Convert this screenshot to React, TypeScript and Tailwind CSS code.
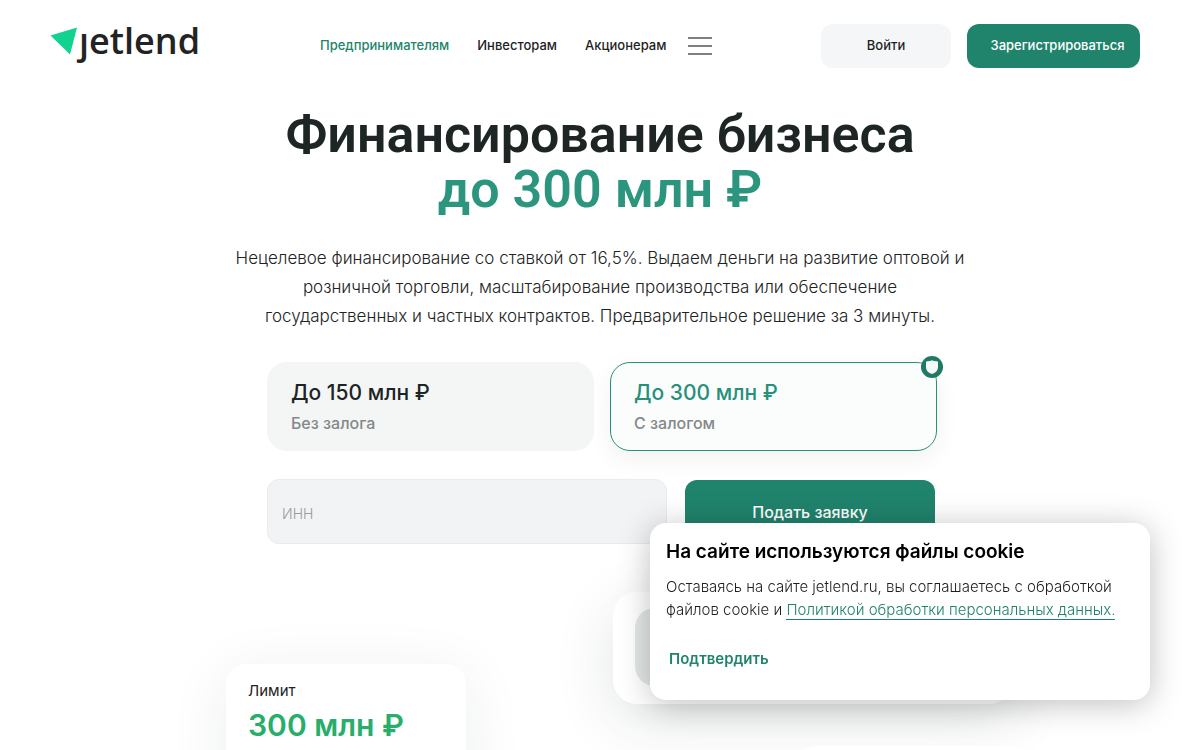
import { useState } from "react";

const NAV = ["Предпринимателям", "Инвесторам", "Акционерам"];

const OFFERS = [
  { id: "plain", title: "До 150 млн ₽", note: "Без залога" },
  { id: "secured", title: "До 300 млн ₽", note: "С залогом" },
];

function Logo() {
  return (
    <a href="#" aria-label="jetlend" className="block w-[150px]">
      <svg viewBox="0 0 152 52" className="h-[52px] w-[152px]" aria-hidden="true">
        <text x="29" y="34" fill="#232323" className="font-['Open_Sans'] text-[36px] font-semibold">
          jetlend
        </text>
        <rect x="25" y="0" width="13" height="13" fill="#fff" />
        <path d="M0.500 15.500 L27 7.500 L20 34.500 Z" fill="#12d290" />
      </svg>
    </a>
  );
}

function Header() {
  return (
    <header className="flex h-[92px] items-center pr-[60px] pl-[50px]">
      <Logo />
      <nav className="ml-[120px] flex items-center gap-7 pb-0.5 text-[13px] leading-5 font-medium">
        {NAV.map((label, i) => (
          <a key={label} href="#" className={i === 0 ? "text-[#22846c]" : "text-[#1f1f1f]"}>
            {label}
          </a>
        ))}
      </nav>
      <button type="button" aria-label="Меню" className="ml-[22px] flex w-6 flex-col gap-1.5">
        <span className="h-0.5 bg-[#808080]" />
        <span className="h-0.5 bg-[#808080]" />
        <span className="h-0.5 bg-[#808080]" />
      </button>
      <div className="ml-auto flex gap-4 text-[13px] font-medium">
        <button type="button" className="h-11 w-[130px] rounded-xl bg-[#f5f6f8] text-[#1f1f1f]">
          Войти
        </button>
        <button type="button" className="h-11 w-[173px] rounded-xl bg-[#20836c] pl-2 text-white">
          Зарегистрироваться
        </button>
      </div>
    </header>
  );
}

function Offers() {
  const [chosen, setChosen] = useState("secured");
  return (
    <div className="grid w-[670px] grid-cols-2 gap-4">
      {OFFERS.map((o) => {
        const active = o.id === chosen;
        return (
          <button
            key={o.id}
            type="button"
            aria-pressed={active}
            onClick={() => setChosen(o.id)}
            className={
              "relative flex h-[89px] flex-col items-start rounded-[20px] border px-[23px] pt-[15px] text-left " +
              (active
                ? "border-[#27907a] bg-[#fbfdfc] shadow-[0_8px_24px_rgba(0,0,0,0.06)]"
                : "border-[#f4f6f6] bg-[#f4f6f6]")
            }
          >
            <span className={"text-[21px] leading-[30px] font-medium " + (active ? "text-[#27907a]" : "text-[#1d2423]")}>
              {o.title}
            </span>
            <span className="text-base leading-[30px] font-medium text-[#858888]">{o.note}</span>
            {active && (
              <svg viewBox="0 0 22 22" className="absolute -top-[7px] -right-[7px] size-[22px]" aria-hidden="true">
                <circle cx="11" cy="11" r="11" fill="#1f7a64" />
                <path
                  d="M11 4.200 C12.500 4.800 14.500 5.200 16 5.200 Q17 5.300 17 6.500 V11 C17 14.500 14.500 17 11 18 C7.500 17 5 14.500 5 11 V6.500 Q5 5.300 6 5.200 C7.500 5.200 9.500 4.800 11 4.200Z"
                  fill="#f4faf8"
                />
              </svg>
            )}
          </button>
        );
      })}
    </div>
  );
}

function CookieNotice() {
  return (
    <aside className="fixed right-[50px] bottom-[50px] h-[177px] w-[500px] rounded-2xl bg-white px-4 pt-[15px] shadow-[0_4px_32px_rgba(0,0,0,0.25)]">
      <h2 className="text-[19px] leading-7 font-semibold text-black">На сайте используются файлы cookie</h2>
      <p className="mt-[9px] text-[15px] leading-[23px] font-light text-[#1f1f1f]">
        Оставаясь на сайте jetlend.ru, вы соглашаетесь с обработкой
        <br />
        файлов cookie и{" "}
        <a href="#" className="border-b border-[#20836c] text-[#20836c]">Политикой обработки персональных данных.</a>
      </p>
      <button type="button" className="mt-[26px] ml-[3px] text-[15px] leading-6 font-semibold text-[#20836c]">
        Подтвердить
      </button>
    </aside>
  );
}

export default function App() {
  return (
    <div className="h-screen overflow-hidden bg-white font-['Inter',sans-serif]">
      <Header />
      <main className="flex flex-col items-center">
        <h1 className="mt-[15px] text-center font-['Roboto',sans-serif] text-[52px] leading-[55px] font-semibold text-[#1d2624]">
          Финансирование бизнеса
          <br />
          <span className="text-[#2b957d]">до 300 млн ₽</span>
        </h1>
        <p className="mt-[27px] text-center text-[17px] leading-[29px] font-light whitespace-nowrap text-[#1d2423]">
          Нецелевое финансирование со ставкой от 16,5%. Выдаем деньги на развитие оптовой и
          <br />
          розничной торговли, масштабирование производства или обеспечение
          <br />
          государственных и частных контрактов. Предварительное решение за 3 минуты.
        </p>
        <div className="mt-[31px] ml-1">
          <Offers />
          <form className="mt-7 flex gap-[18px]" onSubmit={(e) => e.preventDefault()}>
            <input
              type="text"
              aria-label="ИНН"
              placeholder="ИНН"
              className="h-[65px] w-[400px] rounded-xl border border-[#e9ebed] bg-[#f2f3f5] px-3.5 pt-1 text-sm font-light placeholder:text-[#999b9e]"
            />
            <button type="submit" className="mt-px h-16 w-[250px] rounded-xl bg-[#20836c] text-base font-medium text-white">
              Подать заявку
            </button>
          </form>
        </div>
        <div className="mt-12 flex w-[780px] items-start gap-[147px] pl-4">
          <section className="mt-[72px] h-[140px] w-60 shrink-0 rounded-[20px] bg-white px-[22px] pt-[15px] shadow-[0_10px_60px_rgba(20,40,36,0.08)]">
            <p className="text-[15px] leading-6 text-[#1d2423]">Лимит</p>
            <p className="mt-0.5 text-[30px] leading-10 font-semibold text-[#27ae6b]">300 млн ₽</p>
          </section>
          <div className="flex shrink-0 flex-col gap-[42px]">
            <div className="h-28 w-[400px] rounded-3xl bg-white px-[22px] py-4 shadow-[0_16px_60px_rgba(20,40,36,0.12)]">
              <div className="h-[78px] w-[90px] rounded-[20px] bg-[#e3e7e6]" />
            </div>
            <div className="ml-[180px] h-28 w-60 rounded-3xl bg-white" />
          </div>
        </div>
      </main>
      <CookieNotice />
    </div>
  );
}
